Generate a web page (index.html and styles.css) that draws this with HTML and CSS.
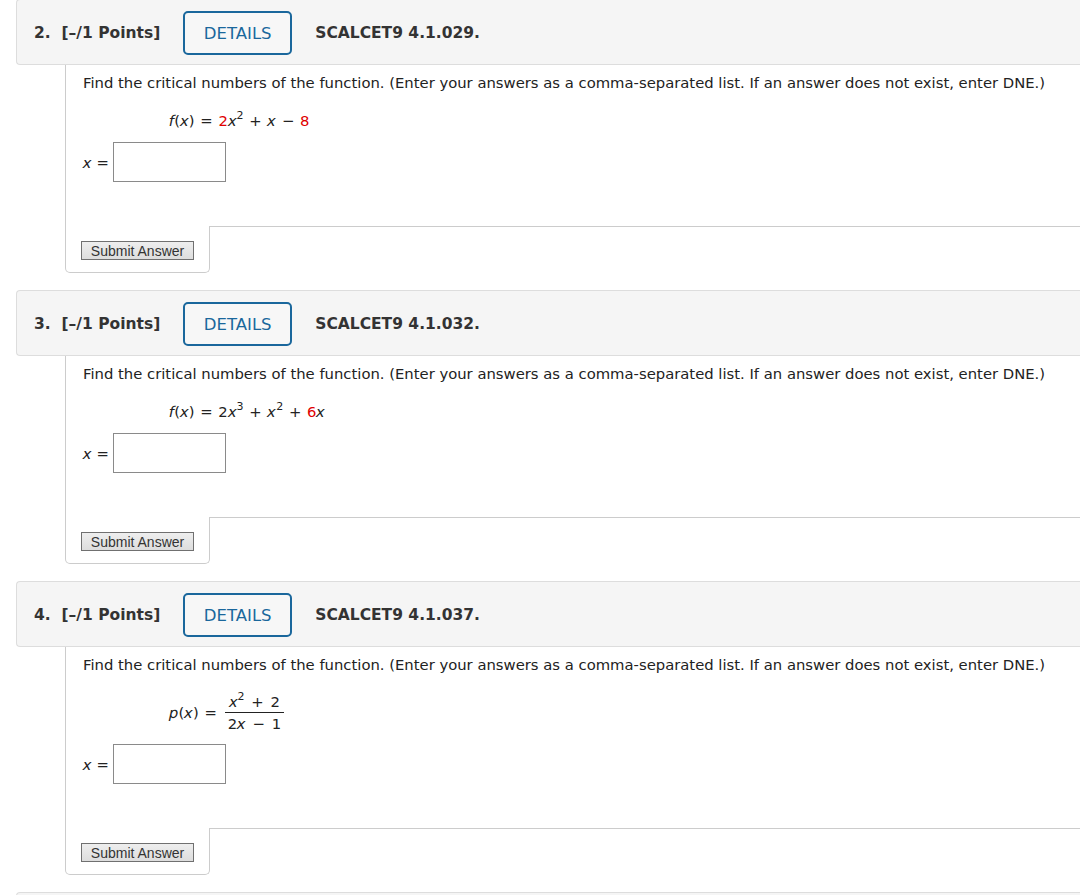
FILE: index.html
```html
<!DOCTYPE html>
<html>
<head>
<meta charset="utf-8">
<link rel="stylesheet" href="styles.css">
</head>
<body>
<div class="page">

  <div class="question">
    <div class="qhead">
      <span class="pts">2.&nbsp; [–/1 Points]</span>
      <button class="details">DETAILS</button>
      <span class="code">SCALCET9 4.1.029.</span>
    </div>
    <div class="qbody">
      <p class="prompt">Find the critical numbers of the function. (Enter your answers as a comma-separated list. If an answer does not exist, enter DNE.)</p>
      <div class="formula"><i>f</i>(<i>x</i>) <span class="op">=</span> <span class="red">2</span><i>x</i><sup>2</sup> <span class="op">+</span> <i>x</i> <span class="op">−</span> <span class="red">8</span></div>
      <div class="answer"><span class="lbl"><i>x</i> =</span><input class="ans" type="text"></div>
    </div>
    <div class="submitrow">
      <div class="submitbox"><button class="submit">Submit Answer</button></div>
      <div class="filler"></div>
    </div>
  </div>

  <div class="question">
    <div class="qhead">
      <span class="pts">3.&nbsp; [–/1 Points]</span>
      <button class="details">DETAILS</button>
      <span class="code">SCALCET9 4.1.032.</span>
    </div>
    <div class="qbody">
      <p class="prompt">Find the critical numbers of the function. (Enter your answers as a comma-separated list. If an answer does not exist, enter DNE.)</p>
      <div class="formula"><i>f</i>(<i>x</i>) <span class="op">=</span> 2<i>x</i><sup>3</sup> <span class="op">+</span> <i>x</i><sup>2</sup> <span class="op">+</span> <span class="red">6</span><i>x</i></div>
      <div class="answer"><span class="lbl"><i>x</i> =</span><input class="ans" type="text"></div>
    </div>
    <div class="submitrow">
      <div class="submitbox"><button class="submit">Submit Answer</button></div>
      <div class="filler"></div>
    </div>
  </div>

  <div class="question">
    <div class="qhead">
      <span class="pts">4.&nbsp; [–/1 Points]</span>
      <button class="details">DETAILS</button>
      <span class="code">SCALCET9 4.1.037.</span>
    </div>
    <div class="qbody">
      <p class="prompt">Find the critical numbers of the function. (Enter your answers as a comma-separated list. If an answer does not exist, enter DNE.)</p>
      <div class="formula frac-formula"><span class="lhs"><i>p</i>(<i>x</i>) <span class="op">=</span></span>
        <span class="frac"><span class="num"><i>x</i><sup>2</sup> <span class="op">+</span> 2</span><span class="den">2<i>x</i> <span class="op">−</span> 1</span></span>
      </div>
      <div class="answer"><span class="lbl"><i>x</i> =</span><input class="ans" type="text"></div>
    </div>
    <div class="submitrow">
      <div class="submitbox"><button class="submit">Submit Answer</button></div>
      <div class="filler"></div>
    </div>
  </div>

  <div class="question">
    <div class="qhead"></div>
  </div>
</div>
</body>
</html>
```

FILE: styles.css
```css
html, body {
  margin: 0;
  padding: 0;
  background: #fff;
  overflow: hidden;
}
body {
  font-family: "DejaVu Sans", Verdana, sans-serif;
  color: #222;
}
.page {
  padding-left: 16px;
  margin-top: -1px;
}
.question {
  margin-bottom: 17px;
}
.qhead {
  display: flex;
  align-items: center;
  height: 62px;
  padding-top: 2px;
  background: #f5f5f5;
  border: 1px solid #ddd;
  border-right: none;
  border-radius: 4px 0 0 4px;
  padding-left: 17px;
  font-weight: bold;
  font-size: 15.5px;
  color: #333;
}
.pts {
  white-space: nowrap;
}
.details {
  box-sizing: border-box;
  width: 109px;
  height: 44px;
  margin: 0 23px 0 23px;
  border: 2px solid #1a679c;
  border-radius: 5px;
  background: #f7f7f7;
  color: #1a679c;
  font-family: "DejaVu Sans", Verdana, sans-serif;
  font-size: 16.5px;
  padding: 0;
}
.code {
  white-space: nowrap;
}
.qbody {
  margin-left: 49px;
  border-left: 1px solid #ccc;
  padding: 8px 0 44px 17px;
  font-size: 14.8px;
}
.prompt {
  margin: 0;
  line-height: 20px;
  white-space: nowrap;
}
.formula {
  margin: 18px 0 0 86px;
  line-height: 20px;
  height: 20px;
}
.formula i, .lbl i {
  display: inline-block;
  font-style: normal;
  transform: skewX(-12deg);
}
.formula .op {
  margin: 0 1px;
}
.formula sup {
  font-size: 11px;
  vertical-align: 7px;
  line-height: 0;
}
.red {
  color: #e00000;
}
.frac-formula {
  display: flex;
  align-items: center;
  height: 40px;
  margin-top: 18px;
}
.lhs {
  margin-right: 7px;
}
.frac {
  display: inline-flex;
  flex-direction: column;
  align-items: center;
}
.num {
  line-height: 20px;
  border-bottom: 1px solid #222;
  padding: 0 4px;
}
.num .op, .den .op {
  margin: 0 2px;
}
.den {
  line-height: 21px;
}
.answer {
  display: flex;
  align-items: center;
  margin-top: 11px;
}
.lbl {
  width: 30px;
}
.ans {
  box-sizing: border-box;
  width: 113px;
  height: 40px;
  border: 1px solid #8a8a8a;
  margin: 0;
  padding: 0;
}
.submitrow {
  display: flex;
  align-items: flex-start;
}
.submitbox {
  margin-left: 49px;
  width: 128px;
  border: 1px solid #ccc;
  border-top: none;
  border-radius: 0 0 5px 5px;
  padding: 15px 0 12px 15px;
}
.submit {
  box-sizing: border-box;
  display: block;
  height: 19px;
  width: 113px;
  padding: 0;
  border: 1px solid #707070;
  border-radius: 0;
  background: linear-gradient(#eeeeee, #dddddd);
  font-family: "Liberation Sans", Arial, sans-serif;
  font-size: 14px;
  color: #333;
  line-height: 16px;
}
.filler {
  flex: 1;
  border-top: 1px solid #ccc;
}
```
